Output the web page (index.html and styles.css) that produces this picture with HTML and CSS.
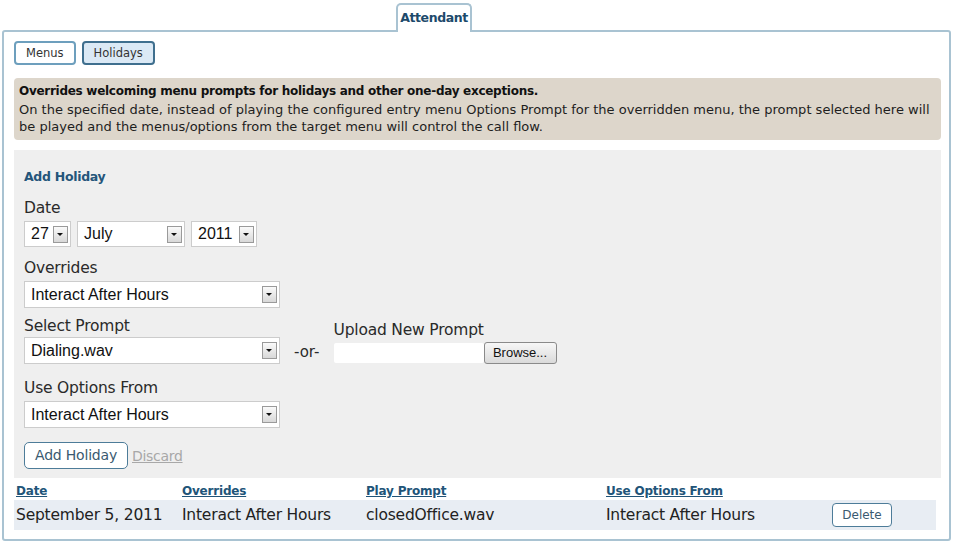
FILE: index.html
```html
<!DOCTYPE html>
<html>
<head>
<meta charset="utf-8">
<link rel="stylesheet" href="styles.css">
</head>
<body>
<div class="tabs">
  <div class="tab">Attendant</div>
</div>
<div class="panel">
  <div class="subnav">
    <span class="pill">Menus</span>
    <span class="pill active">Holidays</span>
  </div>
  <div class="info">
    <div class="info-title">Overrides welcoming menu prompts for holidays and other one-day exceptions.</div>
    <div>On the specified date, instead of playing the configured entry menu Options Prompt for the overridden menu, the prompt selected here will be played and the menus/options from the target menu will control the call flow.</div>
  </div>
  <div class="form">
    <div class="form-title">Add Holiday</div>
    <div class="group g-date">
      <div class="label">Date</div>
      <div class="row">
        <span class="select w-day"><span class="val">27</span><span class="arrow"></span></span>
        <span class="select w-month"><span class="val">July</span><span class="arrow"></span></span>
        <span class="select w-year"><span class="val">2011</span><span class="arrow"></span></span>
      </div>
    </div>
    <div class="group g-over">
      <div class="label">Overrides</div>
      <span class="select w-wide"><span class="val">Interact After Hours</span><span class="arrow"></span></span>
    </div>
    <div class="group g-prompt prompt-row">
      <div>
        <div class="label prompt-label">Select Prompt</div>
        <span class="select w-wide"><span class="val">Dialing.wav</span><span class="arrow"></span></span>
      </div>
      <span class="or">-or-</span>
      <div>
        <div class="label upload-label">Upload New Prompt</div>
        <div class="file">
          <span class="file-input"></span>
          <span class="browse">Browse...</span>
        </div>
      </div>
    </div>
    <div class="group g-opts">
      <div class="label">Use Options From</div>
      <span class="select w-wide"><span class="val">Interact After Hours</span><span class="arrow"></span></span>
    </div>
    <div class="actions">
      <span class="btn">Add Holiday</span>
      <a class="discard">Discard</a>
    </div>
  </div>
  <table class="list">
    <thead>
      <tr>
        <th class="c1"><a>Date</a></th>
        <th class="c2"><a>Overrides</a></th>
        <th class="c3"><a>Play Prompt</a></th>
        <th class="c4"><a>Use Options From</a></th>
        <th></th>
      </tr>
    </thead>
    <tbody>
      <tr>
        <td>September 5, 2011</td>
        <td>Interact After Hours</td>
        <td>closedOffice.wav</td>
        <td>Interact After Hours</td>
        <td><span class="del">Delete</span></td>
      </tr>
    </tbody>
  </table>
</div>
</body>
</html>
```

FILE: styles.css
```css
html, body {
  margin: 0;
  padding: 0;
  background: #ffffff;
}
body {
  font-family: "DejaVu Sans", sans-serif;
  color: #1e1e1e;
  width: 954px;
}
.tabs {
  height: 30px;
  display: flex;
  align-items: flex-end;
  padding-left: 396px;
  position: relative;
  z-index: 2;
}
.tab {
  width: 76px;
  height: 29px;
  border: 2px solid #a9c3d2;
  border-bottom: none;
  border-radius: 5px 5px 0 0;
  background: #fff;
  margin-bottom: -2px;
  box-sizing: border-box;
  text-align: center;
  font-weight: bold;
  font-size: 12.5px;
  line-height: 25px;
  color: #1d4a6b;
  letter-spacing: -0.4px;
}
.panel {
  margin-left: 2px;
  width: 949px;
  height: 511px;
  box-sizing: border-box;
  border: 2px solid #a9c3d2;
  border-radius: 3px;
  padding: 9px 8px 0 10px;
}
.subnav {
  display: flex;
  gap: 6px;
  height: 24px;
}
.pill {
  box-sizing: border-box;
  height: 24px;
  border: 2px solid #6d9fbd;
  border-radius: 4px;
  font-size: 11.5px;
  line-height: 20px;
  color: #333;
  padding: 0 10px;
  background: #fff;
}
.pill.active {
  background: #dbe9f5;
  border-color: #3f6f8e;
}
.info {
  margin-top: 13px;
  height: 62px;
  box-sizing: border-box;
  background: #ddd6cb;
  border-radius: 4px;
  padding: 4px 5px;
  font-size: 13px;
  line-height: 17px;
  color: #1e1e1e;
}
.info-title {
  font-size: 12px;
  line-height: 19px;
  font-weight: bold;
  color: #111;
  letter-spacing: -0.28px;
}
.form {
  margin-top: 10px;
  height: 328px;
  box-sizing: border-box;
  background: #efefef;
  padding: 19px 10px 0 10px;
}
.form-title {
  font-weight: bold;
  font-size: 12.5px;
  color: #24557a;
  line-height: 16px;
  letter-spacing: -0.3px;
  margin-bottom: 13px;
}
.label {
  font-size: 15.5px;
  line-height: 20px;
  color: #2a2a2a;
  margin-bottom: 3px;
  letter-spacing: -0.2px;
}
.g-date { margin-bottom: 11px; }
.g-over { margin-bottom: 8px; }
.g-prompt { margin-bottom: 14px; }
.g-opts { margin-bottom: 14px; }
.prompt-label { margin-bottom: 1px; }
.row {
  display: flex;
  gap: 6px;
}
.select {
  display: inline-flex;
  align-items: center;
  justify-content: space-between;
  box-sizing: border-box;
  height: 27px;
  background: #fff;
  border: 1px solid #cccccc;
  padding: 0 2px 0 6px;
  font-family: "Liberation Sans", Arial, sans-serif;
  font-size: 16px;
  color: #111;
  vertical-align: top;
}
.row .select {
  height: 26px;
}
.w-day { width: 47px; }
.w-month { width: 108px; }
.w-year { width: 66px; }
.w-wide { width: 256px; }
.arrow {
  width: 15px;
  height: 17px;
  box-sizing: border-box;
  border: 1px solid #9a9a9a;
  background: linear-gradient(#fafafa, #d8d8d8);
  position: relative;
  flex: none;
}
.arrow::after {
  content: "";
  position: absolute;
  left: 3px;
  top: 6px;
  border-left: 3.5px solid transparent;
  border-right: 3.5px solid transparent;
  border-top: 3.5px solid #111;
}
.prompt-row {
  display: flex;
  align-items: flex-start;
}
.or {
  font-size: 15px;
  color: #2a2a2a;
  margin: 26px 14px 0 14px;
  line-height: 20px;
}
.upload-label {
  margin-top: 4px;
  margin-bottom: 2px;
}
.file {
  display: flex;
  align-items: center;
}
.file-input {
  display: block;
  width: 150px;
  height: 20px;
  background: #fff;
  border-radius: 2px;
}
.browse {
  display: block;
  box-sizing: border-box;
  width: 73px;
  height: 22px;
  border: 1px solid #8a8a8a;
  border-radius: 3px;
  background: linear-gradient(#f7f7f7, #dadada);
  font-family: "Liberation Sans", Arial, sans-serif;
  font-size: 13px;
  line-height: 20px;
  text-align: center;
  color: #111;
}
.actions {
  display: flex;
  align-items: center;
  gap: 4px;
}
.btn {
  box-sizing: border-box;
  height: 27px;
  width: 104px;
  border: 1px solid #4d7c99;
  border-radius: 5px;
  background: #fff;
  font-size: 14px;
  line-height: 25px;
  text-align: center;
  color: #3a5a70;
  letter-spacing: -0.2px;
}
.discard {
  font-size: 14px;
  color: #a8a8a8;
  text-decoration: underline;
  letter-spacing: -0.3px;
}
.list {
  width: 922px;
  border-collapse: collapse;
  margin-top: 4px;
}
.list th {
  text-align: left;
  padding: 0 2px;
  height: 18px;
  font-size: 12px;
  font-weight: bold;
  letter-spacing: -0.2px;
}
.list th a {
  color: #215478;
  text-decoration: underline;
}
.list .c1 { width: 162px; }
.list .c2 { width: 180px; }
.list .c3 { width: 236px; }
.list .c4 { width: 222px; }
.list td {
  background: #e8edf3;
  height: 30px;
  padding: 0 2px;
  font-size: 15.5px;
  color: #222;
  letter-spacing: -0.2px;
}
.del {
  display: inline-block;
  box-sizing: border-box;
  width: 60px;
  height: 24px;
  border: 1px solid #4d7c99;
  border-radius: 4px;
  background: #fff;
  font-size: 12px;
  line-height: 22px;
  text-align: center;
  color: #3a5a70;
  letter-spacing: 0;
  vertical-align: middle;
}
```
